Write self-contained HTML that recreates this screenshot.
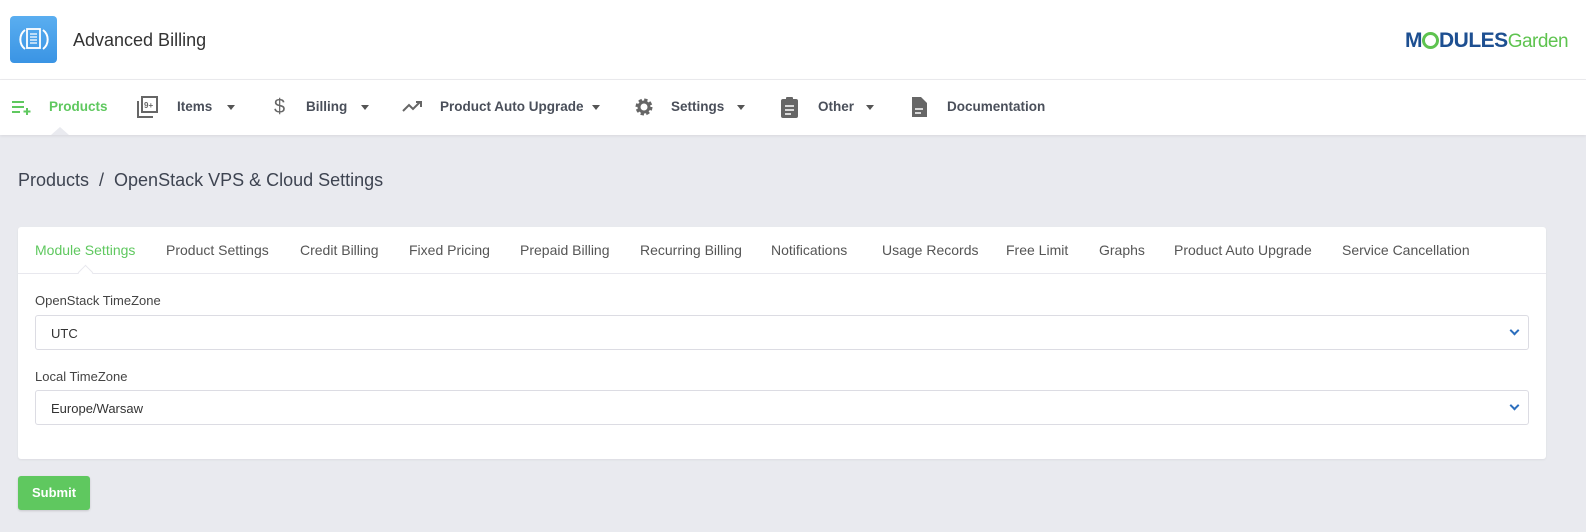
<!DOCTYPE html>
<html><head><meta charset="utf-8"><style>
*{box-sizing:border-box;margin:0;padding:0}
body{width:1586px;height:532px;background:#e9eaef;font-family:"Liberation Sans",Arial,sans-serif;color:#3e4451;position:relative;overflow:hidden}
.hdr{position:absolute;left:0;top:0;width:1586px;height:80px;background:#fff;border-bottom:1px solid #ececef}
.logo{position:absolute;left:10px;top:16px;width:47px;height:47px;border-radius:4px;background:linear-gradient(#5aaef0,#3a94e4)}
.title{position:absolute;left:73px;top:30px;font-size:18px;color:#333}
.nav{position:absolute;left:0;top:80px;width:1586px;height:55px;background:#fff;box-shadow:0 1px 3px rgba(0,0,0,.08)}
.ni{position:absolute;top:19px;font-size:13.5px;font-weight:bold;color:#4a4f5a}
.ni svg{position:absolute}
.caret{position:absolute;top:25px;width:0;height:0;border-left:4.5px solid transparent;border-right:4.5px solid transparent;border-top:5px solid #555}
.bc{position:absolute;left:18px;top:170px;font-size:18px;color:#3e4451}
.card{position:absolute;left:18px;top:227px;width:1528px;height:232px;background:#fff;border-radius:3px;box-shadow:0 1px 2px rgba(0,0,0,.06)}
.tabs{height:47px;border-bottom:1px solid #e8e8ee;position:relative}
.tab{position:absolute;top:15px;font-size:14px;color:#555;white-space:nowrap}
.lbl{position:absolute;left:17px;font-size:13px;color:#444}
.sel{position:absolute;left:17px;width:1494px;height:35px;border:1px solid #dcdce3;border-radius:3px;font-size:13px;color:#333;padding:10px 0 0 15px}
.sel:after{content:"";position:absolute;right:10px;top:11px;width:5px;height:5px;border-right:2px solid #2c6fbe;border-bottom:2px solid #2c6fbe;transform:rotate(45deg)}
.btn{position:absolute;left:18px;top:476px;width:72px;height:34px;background:#5fc85f;border-radius:3px;color:#fff;font-weight:bold;font-size:13px;text-align:center;line-height:34px;box-shadow:0 1px 2px rgba(0,0,0,.15)}
</style></head><body>
<div class="hdr">
<div class="logo"><svg width="47" height="47" viewBox="0 0 47 47"><path d="M15 14 A12 12 0 0 0 15 33" stroke="#fff" stroke-width="2" fill="none"/><path d="M33 14 A12 12 0 0 1 33 33" stroke="#fff" stroke-width="2" fill="none"/><rect x="17" y="13" width="13" height="19" fill="none" stroke="#fff" stroke-width="1.8"/><path d="M20 18h7M20 21h7M20 24h7M20 27h7" stroke="#fff" stroke-width="1.2"/></svg></div>
<div class="title">Advanced Billing</div>
<div style="position:absolute;left:1405px;top:29px;font-size:21px;font-weight:bold;color:#1d4f91;letter-spacing:-0.5px">M<span style="display:inline-block;width:17px;height:17px;border:3px solid #5ec34f;border-radius:50%;vertical-align:-2px"></span>DULES<span style="font-weight:normal;color:#5ec34f;font-size:19px">Garden</span></div>
</div>
<div class="nav">
<div class="ni" style="left:12px;color:#5fc85f"><svg style="left:0;top:0" width="22" height="16" viewBox="0 0 22 16"><path d="M0 3h12M0 8h12M0 13h8M15 9v7M11.5 12.5h7" stroke="#5fc85f" stroke-width="2"/></svg><span style="position:absolute;left:37px;white-space:nowrap">Products</span></div>
<div style="position:absolute;left:51px;top:47px;width:0;height:0;border-left:9px solid transparent;border-right:9px solid transparent;border-bottom:8px solid #e9eaef"></div>
<div class="ni" style="left:137px"><svg style="left:0;top:-3px" width="22" height="22" viewBox="0 0 22 22"><rect x="5" y="1" width="15" height="15" fill="none" stroke="#666" stroke-width="2"/><path d="M1 5v16h15" fill="none" stroke="#666" stroke-width="2"/><text x="7" y="12" font-size="8" fill="#666" font-weight="bold">9+</text></svg><span style="position:absolute;left:40px">Items</span></div><div class="caret" style="left:227px"></div>
<div class="ni" style="left:274px"><span style="position:absolute;left:0;top:-3px;font-size:20px;font-weight:normal;color:#666">$</span><span style="position:absolute;left:32px">Billing</span></div><div class="caret" style="left:361px"></div>
<div class="ni" style="left:402px"><svg style="left:0;top:0" width="22" height="14" viewBox="0 0 22 14"><path d="M1 12l6-6 4 4 7-7M14 3h5v5" fill="none" stroke="#666" stroke-width="2"/></svg><span style="position:absolute;left:38px;white-space:nowrap">Product Auto Upgrade</span></div><div class="caret" style="left:592px"></div>
<div class="ni" style="left:634px"><svg style="left:0;top:-2px" width="20" height="20" viewBox="0 0 20 20"><circle cx="10" cy="10" r="6.5" fill="none" stroke="#666" stroke-width="4" stroke-dasharray="3 2.1"/><circle cx="10" cy="10" r="5" fill="none" stroke="#666" stroke-width="3"/></svg><span style="position:absolute;left:37px">Settings</span></div><div class="caret" style="left:737px"></div>
<div class="ni" style="left:780px"><svg style="left:0;top:-3px" width="19" height="22" viewBox="0 0 19 22"><rect x="1" y="3" width="17" height="19" rx="2" fill="#666"/><rect x="6" y="1" width="7" height="4" rx="1" fill="#666"/><path d="M5 10h9M5 14h9M5 18h6" stroke="#fff" stroke-width="1.6"/></svg><span style="position:absolute;left:38px">Other</span></div><div class="caret" style="left:866px"></div>
<div class="ni" style="left:910px"><svg style="left:0;top:-3px" width="18" height="22" viewBox="0 0 18 22"><path d="M2 1h9l6 6v14H2z" fill="#666"/><path d="M5 13h8M5 17h6" stroke="#fff" stroke-width="1.6"/></svg><span style="position:absolute;left:37px;white-space:nowrap">Documentation</span></div>
</div>
<div class="bc">Products&nbsp; / &nbsp;OpenStack VPS &amp; Cloud Settings</div>
<div class="card">
<div class="tabs">
<span class="tab" style="left:17px;color:#5fc85f">Module Settings</span>
<span class="tab" style="left:148px">Product Settings</span>
<span class="tab" style="left:282px">Credit Billing</span>
<span class="tab" style="left:391px">Fixed Pricing</span>
<span class="tab" style="left:502px">Prepaid Billing</span>
<span class="tab" style="left:622px">Recurring Billing</span>
<span class="tab" style="left:753px">Notifications</span>
<span class="tab" style="left:864px">Usage Records</span>
<span class="tab" style="left:988px">Free Limit</span>
<span class="tab" style="left:1081px">Graphs</span>
<span class="tab" style="left:1156px">Product Auto Upgrade</span>
<span class="tab" style="left:1324px">Service Cancellation</span>
<div style="position:absolute;left:62px;top:40px;width:11px;height:11px;background:#fff;border-left:1px solid #e8e8ee;border-top:1px solid #e8e8ee;transform:rotate(45deg)"></div>
</div>
<div class="lbl" style="top:66px">OpenStack TimeZone</div>
<div class="sel" style="top:88px">UTC</div>
<div class="lbl" style="top:142px">Local TimeZone</div>
<div class="sel" style="top:163px">Europe/Warsaw</div>
</div>
<div class="btn">Submit</div>
</body></html>
